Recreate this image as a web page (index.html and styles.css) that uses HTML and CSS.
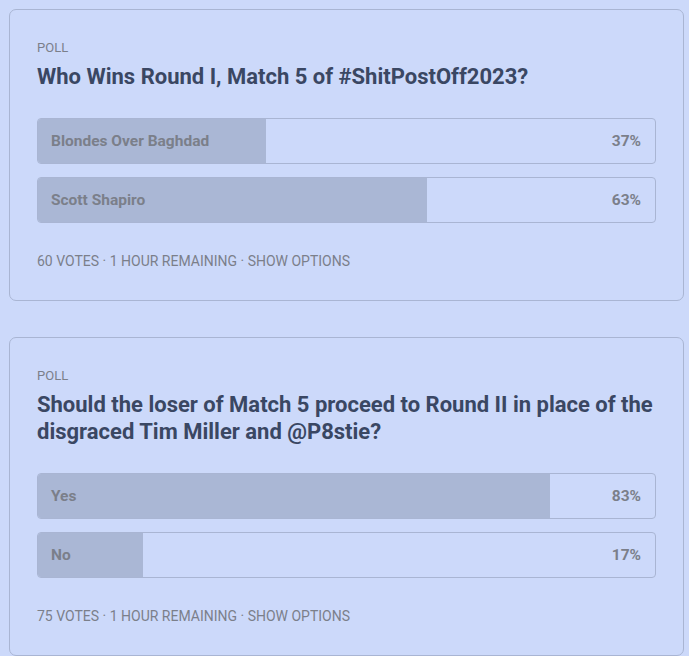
FILE: index.html
```html
<!DOCTYPE html>
<html>
<head>
<meta charset="utf-8">
<link rel="stylesheet" href="styles.css">
</head>
<body>
<div class="page">
  <section class="poll">
    <div class="label">POLL</div>
    <h2 class="question">Who Wins Round I, Match 5 of #ShitPostOff2023?</h2>
    <div class="options">
      <div class="option"><div class="fill" style="width:37%"></div><span class="name">Blondes Over Baghdad</span><span class="pct">37%</span></div>
      <div class="option"><div class="fill" style="width:63%"></div><span class="name">Scott Shapiro</span><span class="pct">63%</span></div>
    </div>
    <div class="meta">60 votes · 1 hour remaining · Show options</div>
  </section>
  <section class="poll">
    <div class="label">POLL</div>
    <h2 class="question">Should the loser of Match 5 proceed to Round II in place of the disgraced Tim Miller and @P8stie?</h2>
    <div class="options">
      <div class="option"><div class="fill" style="width:83%"></div><span class="name">Yes</span><span class="pct">83%</span></div>
      <div class="option"><div class="fill" style="width:17%"></div><span class="name">No</span><span class="pct">17%</span></div>
    </div>
    <div class="meta">75 votes · 1 hour remaining · Show options</div>
  </section>
</div>
</body>
</html>
```
FILE: styles.css
```css
html, body {
  margin: 0;
  padding: 0;
  background: #ccd9fa;
}
body {
  font-family: Roboto, "Liberation Sans", sans-serif;
}
.page {
  padding: 9px 5px 0 9px;
  display: flex;
  flex-direction: column;
  gap: 36px;
}
.poll {
  border: 1px solid #a9b5d3;
  border-radius: 7px;
  padding: 30px 27px 31px 27px;
}
.label {
  font-size: 13px;
  line-height: 16px;
  color: #7b7f8a;
}
.question {
  margin: 7px 0 0 0;
  font-size: 22px;
  line-height: 27.5px;
  font-weight: 700;
  color: #3a4763;
}
.options {
  margin-top: 27px;
  display: flex;
  flex-direction: column;
  gap: 13px;
}
.option {
  position: relative;
  height: 44px;
  border: 1px solid #a9b5d3;
  border-radius: 4px;
  display: flex;
  align-items: center;
  justify-content: space-between;
  padding: 0 14px 0 13px;
  overflow: hidden;
}
.fill {
  position: absolute;
  left: 0;
  top: 0;
  bottom: 0;
  background: #aab7d5;
}
.name, .pct {
  position: relative;
  font-size: 15.5px;
  font-weight: 700;
  color: #7b7f8a;
}
.meta {
  margin-top: 30px;
  font-size: 14px;
  line-height: 16px;
  color: #7b7f8a;
  text-transform: uppercase;
}
```
